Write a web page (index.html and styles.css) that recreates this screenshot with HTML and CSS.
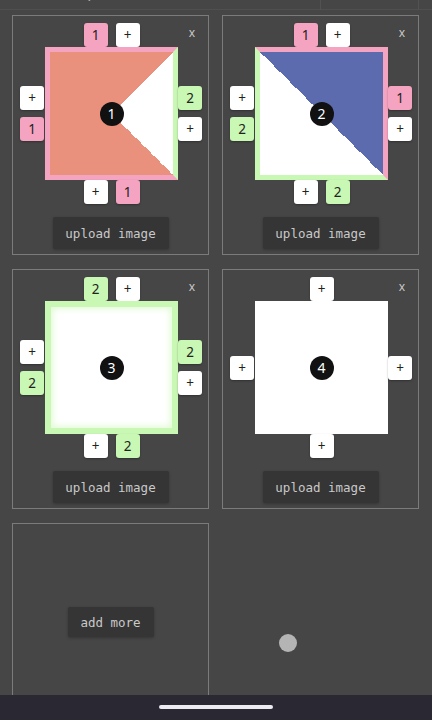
FILE: index.html
```html
<!doctype html>
<html lang="en">
<head>
    <meta charset="UTF-8">
    <title>tiles</title>
    <meta name="viewport" content="width=device-width,initial-scale=1.0">
    <link rel="stylesheet" href="styles.css">
</head>
<body>
<div class="topbar">
    <span class="caret">v</span>
    <div class="topbox"></div>
</div>

<div class="grid">
    <!-- tile 1 -->
    <div class="card">
        <span class="close">x</span>
        <div class="tile">
            <div class="row top">
                <span class="btn pink">1</span>
                <span class="btn">+</span>
            </div>
            <div class="side left">
                <span class="btn">+</span>
                <span class="btn pink">1</span>
            </div>
            <div class="square sq1">
                <span class="num">1</span>
            </div>
            <div class="side right">
                <span class="btn green">2</span>
                <span class="btn">+</span>
            </div>
            <div class="row bottom">
                <span class="btn">+</span>
                <span class="btn pink">1</span>
            </div>
        </div>
        <button class="action">upload image</button>
    </div>

    <!-- tile 2 -->
    <div class="card">
        <span class="close">x</span>
        <div class="tile">
            <div class="row top">
                <span class="btn pink">1</span>
                <span class="btn">+</span>
            </div>
            <div class="side left">
                <span class="btn">+</span>
                <span class="btn green">2</span>
            </div>
            <div class="square sq2">
                <span class="num">2</span>
            </div>
            <div class="side right">
                <span class="btn pink">1</span>
                <span class="btn">+</span>
            </div>
            <div class="row bottom">
                <span class="btn">+</span>
                <span class="btn green">2</span>
            </div>
        </div>
        <button class="action">upload image</button>
    </div>

    <!-- tile 3 -->
    <div class="card">
        <span class="close">x</span>
        <div class="tile">
            <div class="row top">
                <span class="btn green">2</span>
                <span class="btn">+</span>
            </div>
            <div class="side left">
                <span class="btn">+</span>
                <span class="btn green">2</span>
            </div>
            <div class="square sq3">
                <span class="num">3</span>
            </div>
            <div class="side right">
                <span class="btn green">2</span>
                <span class="btn">+</span>
            </div>
            <div class="row bottom">
                <span class="btn">+</span>
                <span class="btn green">2</span>
            </div>
        </div>
        <button class="action">upload image</button>
    </div>

    <!-- tile 4 -->
    <div class="card">
        <span class="close">x</span>
        <div class="tile">
            <div class="row top">
                <span class="btn">+</span>
            </div>
            <div class="side left">
                <span class="btn">+</span>
            </div>
            <div class="square sq4">
                <span class="num">4</span>
            </div>
            <div class="side right">
                <span class="btn">+</span>
            </div>
            <div class="row bottom">
                <span class="btn">+</span>
            </div>
        </div>
        <button class="action">upload image</button>
    </div>

    <div class="card more">
        <button class="action">add more</button>
    </div>
</div>

<div class="dot"></div>

<div class="navbar">
    <div class="pill"></div>
</div>
</body>
</html>
```

FILE: styles.css
```css
* {
    margin: 0;
    padding: 0;
    box-sizing: border-box;
}

html, body {
    height: 100%;
}

body {
    background: #464646;
    font-family: "Noto Sans", "Open Sans", sans-serif;
    overflow: hidden;
}

.topbar {
    position: relative;
    height: 10px;
    border-bottom: 1px solid #4f4f4f;
}

.topbar .caret {
    position: absolute;
    left: 87px;
    top: -7px;
    font-size: 9px;
    line-height: 9px;
    color: #bbb;
}

.topbar .topbox {
    position: absolute;
    left: 320px;
    top: 0;
    width: 99px;
    height: 10px;
    border-left: 1px solid #525252;
    border-right: 1px solid #525252;
}

.grid {
    display: grid;
    grid-template-columns: 197px 197px;
    column-gap: 13px;
    row-gap: 14px;
    padding: 5px 12px 0;
}

.card {
    position: relative;
    height: 240px;
    border: 1px solid #7b7b7b;
    display: flex;
    flex-direction: column;
    align-items: center;
    padding-top: 7px;
}

.close {
    position: absolute;
    top: 8px;
    right: 13px;
    font-size: 12px;
    color: #c8c8c8;
}

.tile {
    display: grid;
    grid-template-columns: 25px 133px 24px;
    grid-template-rows: 24px 133px 24px;
    margin-left: 1px;
}

.row {
    grid-column: 1 / 4;
    display: flex;
    justify-content: center;
    gap: 8px;
    padding-left: 1px;
}

.row.top {
    grid-row: 1;
}

.row.bottom {
    grid-row: 3;
}

.side {
    grid-row: 2;
    display: flex;
    flex-direction: column;
    justify-content: center;
    gap: 7px;
}

.side.left {
    grid-column: 1;
}

.side.right {
    grid-column: 3;
}

.btn {
    width: 24px;
    height: 24px;
    border-radius: 3px;
    background: #fff;
    color: #222;
    font-size: 13.5px;
    line-height: 24px;
    text-align: center;
    box-shadow: 0 1px 2px rgba(0, 0, 0, 0.3);
}

.btn.pink {
    background: #f4a3c0;
}

.btn.green {
    background: #c9f7b4;
}

.square {
    grid-row: 2;
    grid-column: 2;
    display: flex;
    align-items: center;
    justify-content: center;
    background: #fff;
}

.sq1 {
    border: 5px solid #f4a3c0;
    border-right-color: #c9f7b4;
    background: conic-gradient(from 45deg, #fff 0 90deg, #e9917c 90deg);
}

.sq2 {
    border: 5px solid #f4a3c0;
    border-left-color: #c9f7b4;
    border-bottom-color: #c9f7b4;
    background: linear-gradient(to bottom left, #5c6bae 50%, #fff 50%);
}

.sq3 {
    border: 6px solid #c9f7b4;
    box-shadow: inset 0 0 6px 2px #e2fbd6;
}

.num {
    width: 24px;
    height: 24px;
    border-radius: 50%;
    background: #111;
    color: #fff;
    font-size: 14px;
    line-height: 24px;
    text-align: center;
}

.action {
    margin-top: 13px;
    width: 116px;
    height: 32px;
    border: none;
    border-radius: 2px;
    background: #353535;
    color: #c9c9c9;
    font-family: "DejaVu Sans Mono", "Liberation Mono", monospace;
    font-size: 12.5px;
    box-shadow: 0 1px 3px rgba(0, 0, 0, 0.25);
}

.card.more {
    padding-top: 83px;
}

.card.more .action {
    margin-top: 0;
    width: 86px;
    height: 30px;
}

.dot {
    position: fixed;
    left: 279px;
    top: 634px;
    width: 18px;
    height: 18px;
    border-radius: 50%;
    background: #b4b4b4;
}

.navbar {
    position: fixed;
    left: 0;
    right: 0;
    bottom: 0;
    height: 25px;
    background: #2a2833;
    display: flex;
    justify-content: center;
    padding-top: 10px;
}

.pill {
    width: 114px;
    height: 4px;
    border-radius: 2px;
    background: #ecebf2;
}
```
